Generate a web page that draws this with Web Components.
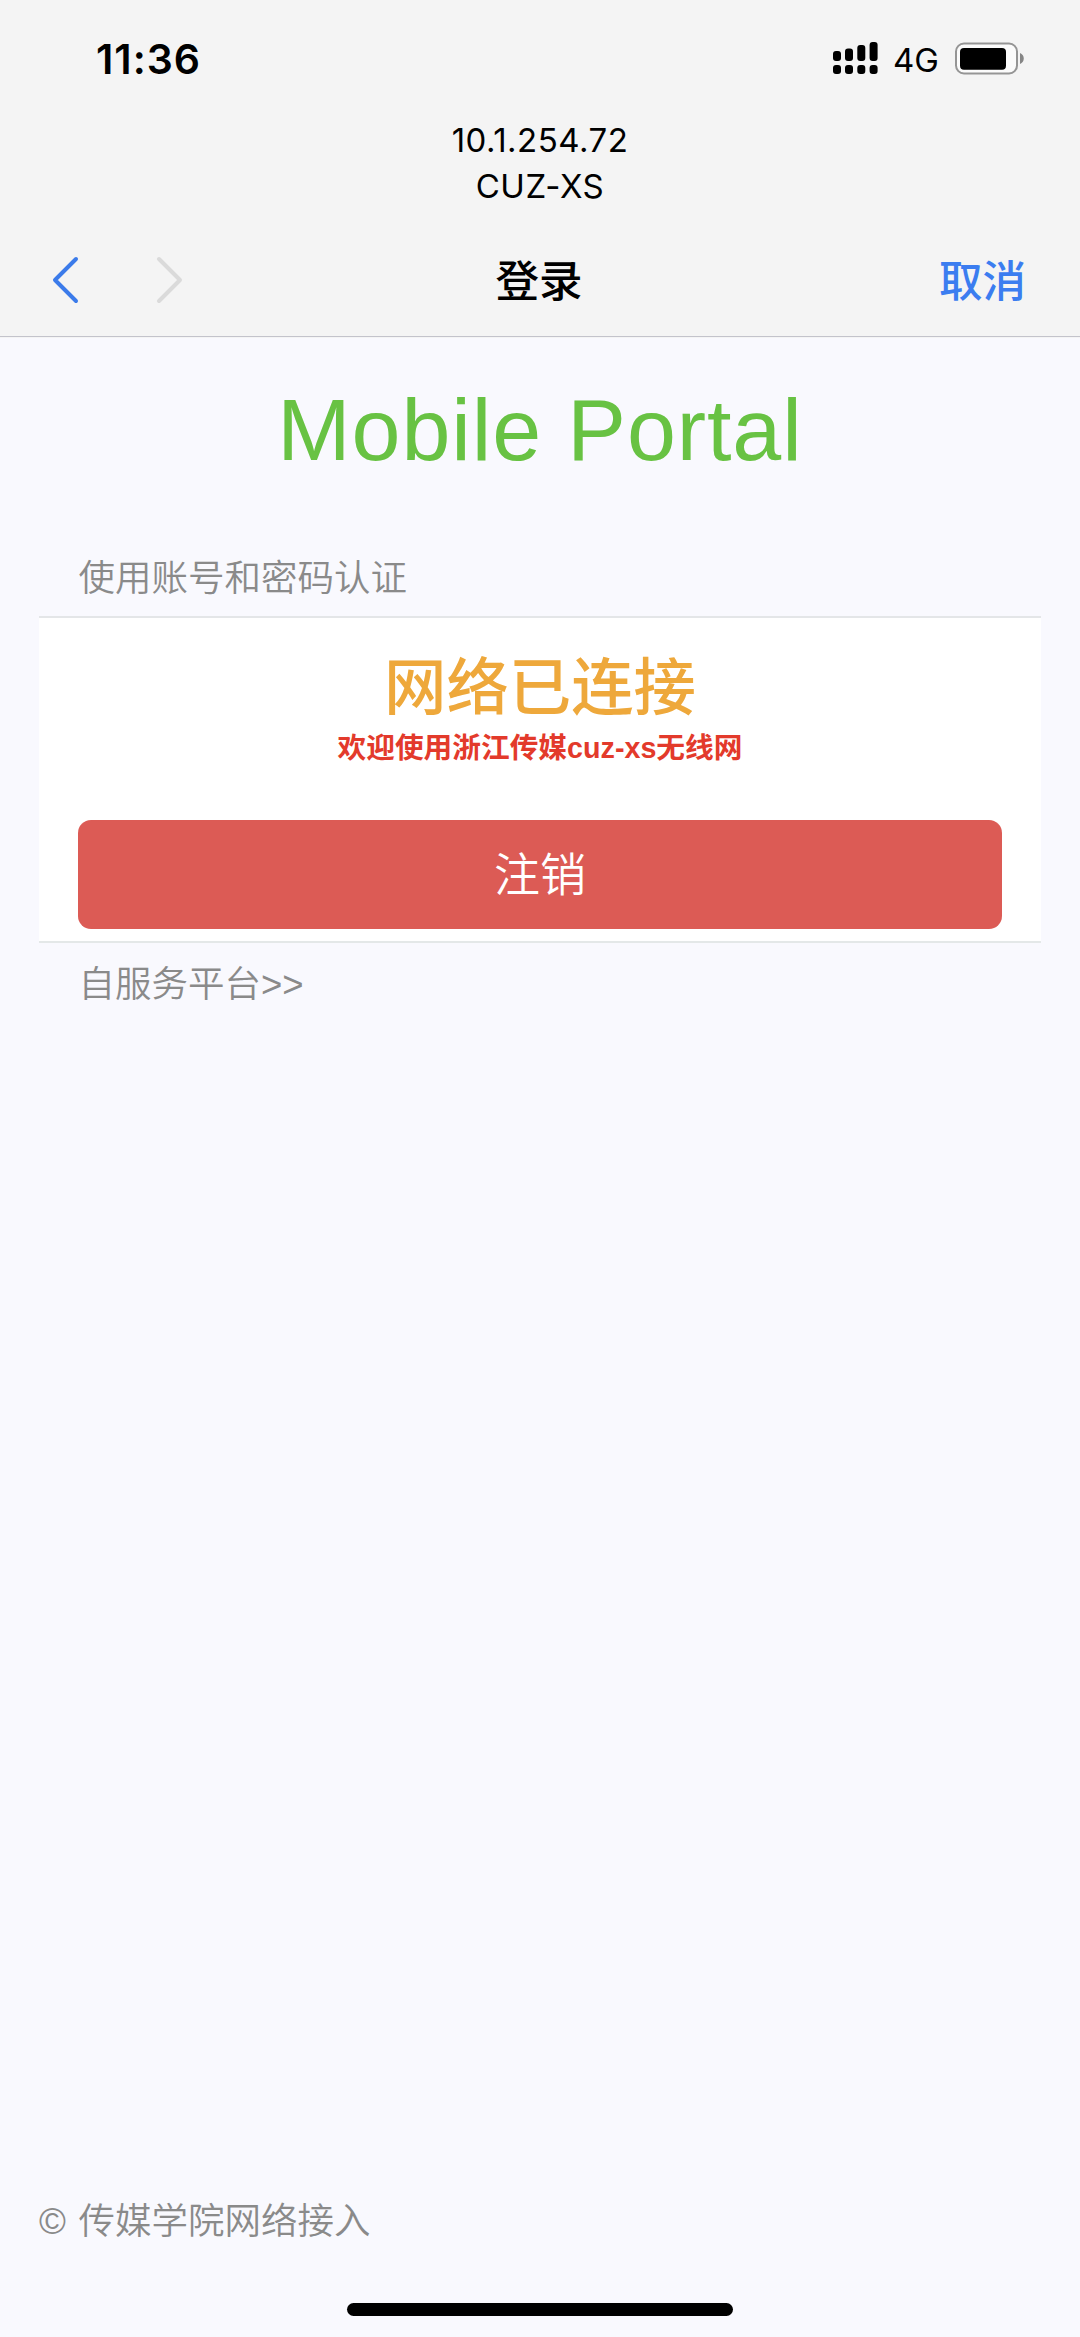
<!DOCTYPE html>
<html lang="zh-CN">
<head>
<meta charset="utf-8">
<title>登录</title>
<style>
html,body{margin:0;background:#f9f9fe}
body{font-family:Inter,"Noto Sans CJK SC",sans-serif}
</style>
</head>
<body>
<portal-app></portal-app>
<script>
const define = (name, html) => customElements.define(name, class extends HTMLElement {
  constructor() {
    super();
    const t = document.createElement('template');
    t.innerHTML = html;
    this.attachShadow({mode: 'open'}).append(t.content.cloneNode(true));
  }
});

define('status-bar', `
<style>
:host{display:flex;justify-content:space-between;align-items:flex-start;height:117px;padding:0 56px 0 96px;box-sizing:border-box}
.time{font-size:41px;font-weight:600;line-height:50px;margin-top:34px;letter-spacing:1px}
.right{display:flex;align-items:flex-start}
.net{font-size:33px;line-height:40px;margin-top:40px;width:62px}
svg{display:block;margin-top:40px}
</style>
<span class="time">11:36</span>
<div class="right">
  <svg width="60" height="36" viewBox="833 40 60 36">
    <rect x="833" y="51" width="8" height="10" rx="3"/><rect x="845" y="48.5" width="8" height="12.5" rx="3"/>
    <rect x="857.3" y="45" width="8" height="16" rx="3"/><rect x="869.6" y="42" width="8" height="19" rx="3"/>
    <rect x="833" y="65" width="8" height="9" rx="3"/><rect x="845" y="65" width="8" height="9" rx="3"/>
    <rect x="857.3" y="65" width="8" height="9" rx="3"/><rect x="869.6" y="65" width="8" height="9" rx="3"/>
  </svg>
  <span class="net">4G</span>
  <svg width="69" height="36" viewBox="955 40 69 36">
    <rect x="956" y="43.5" width="61" height="30" rx="8" fill="#fbfbfb" stroke="#959595" stroke-width="2"/>
    <rect x="960" y="48" width="46" height="21.7" rx="4"/>
    <path d="M1020 53c5 2 5 9 0 11z" fill="#858585"/>
  </svg>
</div>`);

define('network-info', `
<style>:host{display:block;height:107px;text-align:center;font-size:33px;line-height:46px}
::slotted(div){height:46px;letter-spacing:.5px}</style><slot></slot>`);

define('nav-bar', `
<style>
:host{display:grid;grid-template-columns:1fr auto 1fr;align-items:center;height:113px;padding:0 54px 0 52px;box-sizing:border-box;font-size:43.5px;font-weight:500;border-bottom:1.4px solid #c3c3cb;line-height:64px}
.arrows{display:flex;gap:73px;margin:-1px 0 0 -2px}
svg{display:block;fill:none;stroke-width:4;stroke-linecap:round;stroke-linejoin:round}
.cancel{text-align:right;color:#3b7df0}
.cancel,.title{padding-top:1px}
</style>
<div class="arrows">
<svg width="30" height="48" viewBox="0 0 30 48" stroke="#3b7bea"><path d="M26 3 5 24l21 21"/></svg>
<svg width="30" height="48" viewBox="0 0 30 48" stroke="#dadada"><path d="m6 3 21 21L6 45"/></svg>
</div>
<span class="title"><slot></slot></span><span class="cancel"><slot name="action"></slot></span>`);

define('portal-title', `
<style>:host{display:block;height:208px;padding-top:40px;box-sizing:border-box;text-align:center;font:88px/104px "Liberation Sans",sans-serif;letter-spacing:.9px;color:#68c243}</style><slot></slot>`);

define('section-label', `
<style>:host{display:block;height:70px;padding-left:78.5px;font:350 36.5px/65px "Liberation Sans","Noto Sans CJK SC",sans-serif;color:#8a8a8a}</style><slot></slot>`);

define('connect-card', `
<style>
:host{display:flex;flex-direction:column;align-items:stretch;height:327px;box-sizing:border-box;margin:0 39px;padding:35px 39px 0;background:#fff;border-top:2px solid #e4e6e8;border-bottom:2px solid #e4e8e8;text-align:center}
.state{font-size:62.4px;line-height:70px;height:75px;font-weight:500;color:#eea83b}
.welcome{font:700 28.7px/40px "Liberation Sans","Noto Sans CJK SC",sans-serif;height:92px;color:#e33a2b}
</style>
<div class="state"><slot name="state"></slot></div>
<div class="welcome"><slot name="welcome"></slot></div>
<slot></slot>`);

define('action-button', `
<style>:host{display:block}button{display:block;width:100%;height:109px;padding:0 0 2px;border:0;border-radius:13px;background:#dc5b55;color:#fff;font:350 46px/66px Inter,"Noto Sans CJK SC",sans-serif}</style>
<button><slot></slot></button>`);

define('page-footer', `
<style>:host{display:block;margin-top:auto;height:141px;padding-left:39px;font:350 36.5px/52px "Liberation Sans","Noto Sans CJK SC",sans-serif;word-spacing:2.5px;color:#8a8a8a}</style><slot></slot>`);

define('home-indicator', `
<style>:host{display:block;width:386px;height:13px;margin:-34px auto 21px;border-radius:7px;background:#000}</style>`);

define('portal-app', `
<style>
:host{display:flex;flex-direction:column;height:2337px}
header{background:#f4f4f4;height:338px;color:#000}
.service{margin-top:9px}
</style>
<header>
<status-bar></status-bar>
<network-info><div>10.1.254.72</div><div>CUZ-XS</div></network-info>
<nav-bar>登录<span slot="action">取消</span></nav-bar>
</header>
<portal-title>Mobile Portal</portal-title>
<section-label>使用账号和密码认证</section-label>
<connect-card>
<span slot="state">网络已连接</span>
<span slot="welcome">欢迎使用浙江传媒cuz-xs无线网</span>
<action-button>注销</action-button>
</connect-card>
<section-label class="service">自服务平台&gt;&gt;</section-label>
<page-footer>© 传媒学院网络接入</page-footer>
<home-indicator></home-indicator>`);
</script>
</body>
</html>
